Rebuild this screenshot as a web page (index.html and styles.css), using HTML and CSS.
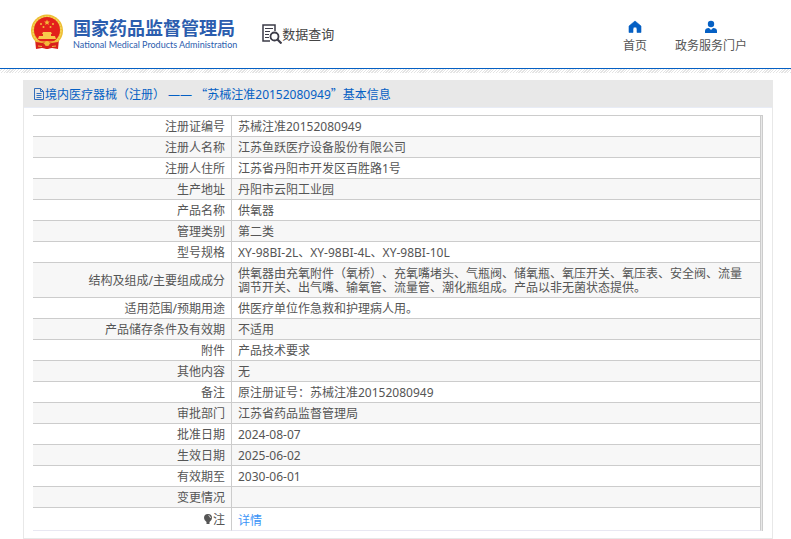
FILE: index.html
```html
<!DOCTYPE html>
<html lang="zh-CN">
<head>
    <meta charset="UTF-8">
    <meta name="viewport" content="width=device-width, initial-scale=1.0">
    <title>国家药品监督管理局 数据查询</title>
    <link rel="stylesheet" href="styles.css">
</head>
<body>
    <header class="header">
        <a class="brand" href="#">
            <svg class="emblem" viewBox="0 0 34 36" aria-hidden="true">
                <path fill="#d9201c" d="M5 25h24l-1 10-6-1-5 1-5-1-6 1z"/>
                <circle cx="17" cy="16.500" r="16" fill="#edbd32"/>
                <circle cx="17" cy="16.500" r="14" fill="none" stroke="#f5d45c" stroke-width="1.5" stroke-dasharray="2 1"/>
                <circle cx="17" cy="16" r="13" fill="#e3211b"/>
                <path fill="#f3ba3a" d="M17 5.500l.8 1.900 2 .2-1.500 1.300.5 2-1.800-1.100-1.800 1.100.5-2-1.500-1.300 2-.2z"/>
                <g fill="#f3ba3a">
                    <circle cx="11" cy="10" r="1"/>
                    <circle cx="13.500" cy="13" r="1"/>
                    <circle cx="20.500" cy="13" r="1"/>
                    <circle cx="23" cy="10" r="1"/>
                </g>
                <path fill="#f8c94b" d="M12 20l1-2h8l1 2h-1v2h4l1 3H8l1-3h4v-2z"/>
                <path fill="#f3ba3a" d="M5 26q12 3 24 0l-2 3-6-1-4 1-4-1-6 1z"/>
                <path fill="#d9201c" d="M6 28l7 1 4 2 4-2 7-1-1 6-5-1-5 2-5-2-5 1z"/>
                <circle cx="17" cy="29.500" r="2.500" fill="#f3ba3a"/>
                <path fill="none" stroke="#f3ba3a" d="M8 32l4 .5M26 32l-4 .5"/>
            </svg>
            <span class="brand-text">
                <span class="brand-cn">国家药品监督管理局</span>
                <span class="brand-en">National Medical Products Administration</span>
            </span>
        </a>
        <a class="search-title" href="#">
            <svg class="search-icon" viewBox="0 0 20 20" fill="none" stroke="#3c3c48" aria-hidden="true">
                <path stroke-width="1.500" d="M8 17H1V1h12v6"/>
                <path d="M3 4.500h8M3 7.500h5M3 10.500h4M3 13.500h4"/>
                <circle cx="12.500" cy="12.500" r="4" stroke-width="1.800"/>
                <path stroke-width="2.200" d="M15.500 15.500l4 4"/>
            </svg>
            <span>数据查询</span>
        </a>
        <nav class="nav">
            <a href="#">
                <svg viewBox="0 0 14 14" fill="#0560c4" aria-hidden="true">
                    <path d="M7 1l6 5v6.500H9V9q0-2-2-2T5 9v3.500H1V6z" stroke="#0560c4" stroke-width=".6" stroke-linejoin="round"/>
                </svg>
                <span>首页</span>
            </a>
            <a href="#">
                <svg viewBox="0 0 14 14" fill="#0560c4" aria-hidden="true">
                    <circle cx="7" cy="4" r="3.200"/>
                    <path d="M1 13V11q0-3 4-3l2 2 2-2q4 0 4 3v2z"/>
                </svg>
                <span>政务服务门户</span>
            </a>
        </nav>
    </header>

    <main class="panel">
        <h1 class="panel-title">
            <svg class="doc-icon" viewBox="0 0 12 12" fill="none" stroke="#3470bd" aria-hidden="true">
                <path d="M1.500.5h6l3 3v8h-9zM7.500.5v3h3M3.500 5.500h5M3.500 7.500h5M3.500 9.500h5"/>
            </svg>
            <span>境内医疗器械（注册） —— <span class="quote">“</span>苏械注准20152080949<span class="quote">”</span>基本信息</span>
        </h1>
        <div class="table-wrap">
            <table class="info">
                <tbody>
                    <tr><th scope="row">注册证编号</th><td>苏械注准20152080949</td></tr>
                    <tr><th scope="row">注册人名称</th><td>江苏鱼跃医疗设备股份有限公司</td></tr>
                    <tr><th scope="row">注册人住所</th><td>江苏省丹阳市开发区百胜路1号</td></tr>
                    <tr><th scope="row">生产地址</th><td>丹阳市云阳工业园</td></tr>
                    <tr><th scope="row">产品名称</th><td>供氧器</td></tr>
                    <tr><th scope="row">管理类别</th><td>第二类</td></tr>
                    <tr><th scope="row">型号规格</th><td>XY-98BI-2L、XY-98BI-4L、XY-98BI-10L</td></tr>
                    <tr><th scope="row">结构及组成/主要组成成分</th><td>供氧器由充氧附件（氧桥）、充氧嘴堵头、气瓶阀、储氧瓶、氧压开关、氧压表、安全阀、流量调节开关、出气嘴、输氧管、流量管、潮化瓶组成。产品以非无菌状态提供。</td></tr>
                    <tr><th scope="row">适用范围/预期用途</th><td>供医疗单位作急救和护理病人用。</td></tr>
                    <tr><th scope="row">产品储存条件及有效期</th><td>不适用</td></tr>
                    <tr><th scope="row">附件</th><td>产品技术要求</td></tr>
                    <tr><th scope="row">其他内容</th><td>无</td></tr>
                    <tr><th scope="row">备注</th><td>原注册证号：苏械注准20152080949</td></tr>
                    <tr><th scope="row">审批部门</th><td>江苏省药品监督管理局</td></tr>
                    <tr><th scope="row">批准日期</th><td>2024-08-07</td></tr>
                    <tr><th scope="row">生效日期</th><td>2025-06-02</td></tr>
                    <tr><th scope="row">有效期至</th><td>2030-06-01</td></tr>
                    <tr><th scope="row">变更情况</th><td></td></tr>
                    <tr class="note">
                        <th scope="row">
                            <svg class="bulb" viewBox="0 0 10 12" aria-hidden="true">
                                <path fill="#555" d="M5 1a4 4 0 0 1 4 4q0 2-2.500 4v2h-3V9Q1 7 1 5a4 4 0 0 1 4-4z"/>
                                <path fill="none" stroke="#fff" stroke-width=".8" d="M5.500 2.500Q7.500 3 7.500 5"/>
                            </svg>注
                        </th>
                        <td><a href="#">详情</a></td>
                    </tr>
                </tbody>
            </table>
        </div>
    </main>
</body>
</html>
```
FILE: styles.css
```css
:root {
    --blue: #0560c4;
    --text: #555;
    --line: #ccc;
    --panel-line: #e8e8e8;
}

* {
    box-sizing: border-box;
}

body {
    margin: 0;
    font-family: "Noto Sans", "Noto Sans CJK SC", sans-serif;
    font-size: 12px;
    line-height: 14px;
    text-spacing-trim: space-all;
    color: var(--text);
    background: #fff;
}

a {
    text-decoration: none;
    color: inherit;
}

svg {
    display: block;
    flex: none;
}

/* header */
.header {
    display: flex;
    align-items: center;
    height: 73px;
    padding: 0 44px 10px 30px;
    position: relative;
}

.header::after {
    content: "";
    position: absolute;
    left: 0;
    right: 0;
    bottom: 0;
    height: 4px;
    border-top: 1px solid var(--blue);
    background: repeating-linear-gradient(135deg, #fff 0 1px, #e4e4e4 1px 2px);
}

.brand {
    display: flex;
    align-items: center;
    gap: 9px;
}

.emblem {
    width: 34px;
    height: 36px;
}

.brand-text {
    display: flex;
    flex-direction: column;
    padding-top: 4px;
    color: #2b5dae;
    white-space: nowrap;
}

.brand-cn {
    font-size: 18px;
    font-weight: 700;
    line-height: 22px;
}

.brand-en {
    font-family: Lato, sans-serif;
    font-size: 9px;
    line-height: 12px;
}

.search-title {
    display: flex;
    align-items: center;
    margin-left: 25px;
    padding-top: 4px;
    font-size: 13px;
    color: #444;
    white-space: nowrap;
}

.search-icon {
    width: 20px;
    height: 20px;
}

.nav {
    display: flex;
    gap: 28px;
    margin-left: auto;
    padding-top: 10px;
}

.nav a {
    display: flex;
    flex-direction: column;
    align-items: center;
    gap: 5px;
    white-space: nowrap;
}

.nav svg {
    width: 14px;
    height: 14px;
}

/* detail panel */
.panel {
    margin: 7px 18px 0 23px;
    border: 1px solid var(--panel-line);
}

.panel-title {
    display: flex;
    align-items: center;
    height: 27px;
    margin: 0;
    padding: 0 9px;
    font-size: 12px;
    font-weight: 400;
    color: var(--blue);
    background: #e8e8e8;
    border-bottom: 1px solid #e8ecf6;
}

.doc-icon {
    width: 12px;
    height: 12px;
}

.quote {
    font-family: "Noto Sans CJK SC", sans-serif;
}

.table-wrap {
    margin: 7px 9px;
    padding-right: 1px;
    background: #e8e8e8;
    border-top: 1px solid var(--line);
    border-right: 1px solid var(--line);
}

.info {
    width: 100%;
    border-collapse: separate;
    border-spacing: 0;
    table-layout: fixed;
    background: #fff;
}

.info th,
.info td {
    padding: 4px 6px 2px;
    border-right: 1px solid var(--line);
    border-bottom: 1px solid var(--line);
    font-weight: 400;
}

.info th {
    width: 199px;
    text-align: right;
}

.info td {
    height: 21px;
    padding-right: 12px;
    text-align: left;
}

.info tr:nth-child(even) {
    background: #f7f7f7;
}

.info .note th,
.info .note td {
    height: 23px;
    border-bottom-color: #e8e8f2;
}

.info .note td {
    padding-top: 6px;
}

.info .note a {
    color: #3b94f7;
}

.bulb {
    display: inline-block;
    width: 10px;
    height: 12px;
    vertical-align: -1px;
}
```
